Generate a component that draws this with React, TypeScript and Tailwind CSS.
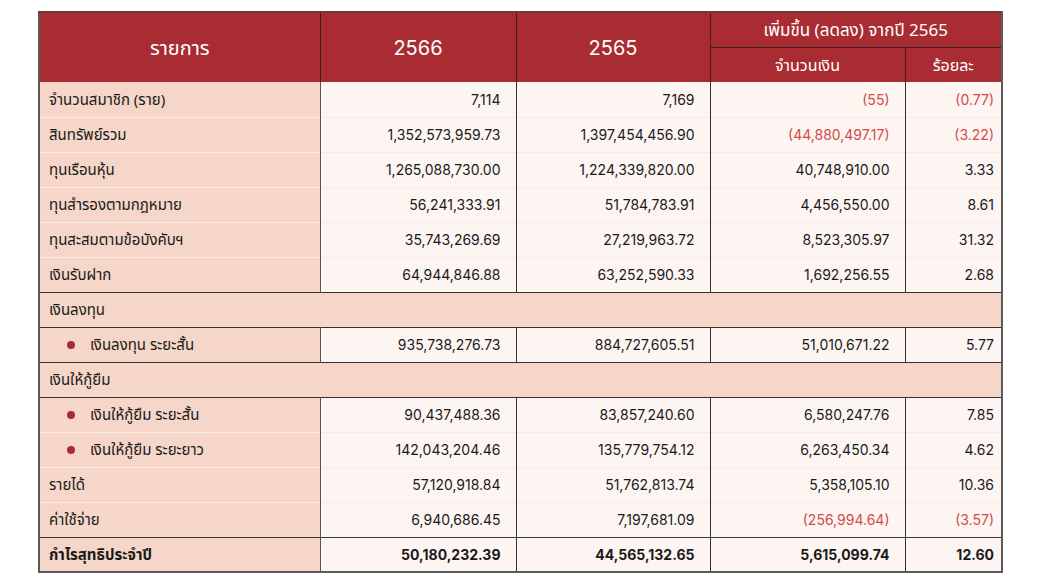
import React from 'react'

type Row = {
  label: string
  kind?: 'item' | 'bullet' | 'section' | 'total'
  y66?: string
  y65?: string
  diff?: string
  pct?: string
  neg?: boolean
  groupEnd?: boolean
}

const rows: Row[] = [
  { label: 'จำนวนสมาชิก (ราย)', y66: '7,114', y65: '7,169', diff: '(55)', pct: '(0.77)', neg: true },
  { label: 'สินทรัพย์รวม', y66: '1,352,573,959.73', y65: '1,397,454,456.90', diff: '(44,880,497.17)', pct: '(3.22)', neg: true },
  { label: 'ทุนเรือนหุ้น', y66: '1,265,088,730.00', y65: '1,224,339,820.00', diff: '40,748,910.00', pct: '3.33' },
  { label: 'ทุนสำรองตามกฎหมาย', y66: '56,241,333.91', y65: '51,784,783.91', diff: '4,456,550.00', pct: '8.61' },
  { label: 'ทุนสะสมตามข้อบังคับฯ', y66: '35,743,269.69', y65: '27,219,963.72', diff: '8,523,305.97', pct: '31.32' },
  { label: 'เงินรับฝาก', y66: '64,944,846.88', y65: '63,252,590.33', diff: '1,692,256.55', pct: '2.68', groupEnd: true },
  { label: 'เงินลงทุน', kind: 'section' },
  { label: 'เงินลงทุน ระยะสั้น', kind: 'bullet', y66: '935,738,276.73', y65: '884,727,605.51', diff: '51,010,671.22', pct: '5.77', groupEnd: true },
  { label: 'เงินให้กู้ยืม', kind: 'section' },
  { label: 'เงินให้กู้ยืม ระยะสั้น', kind: 'bullet', y66: '90,437,488.36', y65: '83,857,240.60', diff: '6,580,247.76', pct: '7.85' },
  { label: 'เงินให้กู้ยืม ระยะยาว', kind: 'bullet', y66: '142,043,204.46', y65: '135,779,754.12', diff: '6,263,450.34', pct: '4.62' },
  { label: 'รายได้', y66: '57,120,918.84', y65: '51,762,813.74', diff: '5,358,105.10', pct: '10.36' },
  { label: 'ค่าใช้จ่าย', y66: '6,940,686.45', y65: '7,197,681.09', diff: '(256,994.64)', pct: '(3.57)', neg: true, groupEnd: true },
  { label: 'กำไรสุทธิประจำปี', kind: 'total', y66: '50,180,232.39', y65: '44,565,132.65', diff: '5,615,099.74', pct: '12.60' },
]

const thai = "font-['Noto_Sans','Noto_Sans_Thai',sans-serif]"
const num = "font-['Inter','Noto_Sans',sans-serif]"

export default function App() {
  return (
    <div className="w-[1040px] h-[585px] bg-white pt-[11px] pl-[38px]">
      <table className="border-collapse table-fixed w-[963px] border-2 border-[#5a5a5a] border-t-[#6b3a3a]">
        <colgroup>
          <col className="w-[281px]" />
          <col className="w-[196px]" />
          <col className="w-[194px]" />
          <col className="w-[195px]" />
          <col className="w-[97px]" />
        </colgroup>
        <thead className="bg-[#a82c32] text-white">
          <tr className="h-[35px]">
            <th rowSpan={2} className={`${thai} font-normal text-[20px] border-r border-[#3a2020]`}>รายการ</th>
            <th rowSpan={2} className={`${num} font-normal text-[20px] border-r border-[#3a2020]`}>2566</th>
            <th rowSpan={2} className={`${num} font-normal text-[20px] border-r border-[#3a2020]`}>2565</th>
            <th colSpan={2} className={`${thai} font-normal text-[17px] border-b border-[#3a2020]`}>
              เพิ่มขึ้น (ลดลง) จากปี 2565
            </th>
          </tr>
          <tr className="h-[35px]">
            <th className={`${thai} font-normal text-[16px] border-r border-[#3a2020]`}>จำนวนเงิน</th>
            <th className={`${thai} font-normal text-[16px]`}>ร้อยละ</th>
          </tr>
        </thead>
        <tbody className="text-[#1a1a1a]">
          {rows.map((r, i) => {
            const line = r.groupEnd || r.kind === 'section' ? 'border-b border-b-[#333]' : 'border-b border-b-[#fbe9e2]'
            if (r.kind === 'section') {
              return (
                <tr key={i} className={`h-[35px] bg-[#f5d6c8] ${line}`}>
                  <td colSpan={5} className={`${thai} text-[15px] pl-[9px]`}>{r.label}</td>
                </tr>
              )
            }
            const bold = r.kind === 'total' ? 'font-bold' : ''
            const red = r.neg ? 'text-[#d34a4a]' : ''
            return (
              <tr key={i} className={`h-[35px] ${line}`}>
                <td className={`${thai} text-[15px] bg-[#f5d6c8] border-r border-r-[#555] ${bold} ${r.kind === 'bullet' ? 'pl-[27px]' : 'pl-[9px]'}`}>
                  {r.kind === 'bullet' ? (
                    <span className="flex items-center gap-[15px]">
                      <span className="w-[8px] h-[8px] rounded-full bg-[#a82c32]" />
                      {r.label}
                    </span>
                  ) : r.label}
                </td>
                <td className={`${num} text-[14px] text-right pr-[15px] bg-[#fdf5f2] border-r border-r-[#333] ${bold}`}>{r.y66}</td>
                <td className={`${num} text-[14px] text-right pr-[15px] bg-[#fdf5f2] border-r border-r-[#333] ${bold}`}>{r.y65}</td>
                <td className={`${num} text-[14px] text-right pr-[15px] bg-[#fdf5f2] border-r border-r-[#333] ${bold} ${red}`}>{r.diff}</td>
                <td className={`${num} text-[14px] text-right pr-[7px] bg-[#fdf5f2] ${bold} ${red}`}>{r.pct}</td>
              </tr>
            )
          })}
        </tbody>
      </table>
    </div>
  )
}
